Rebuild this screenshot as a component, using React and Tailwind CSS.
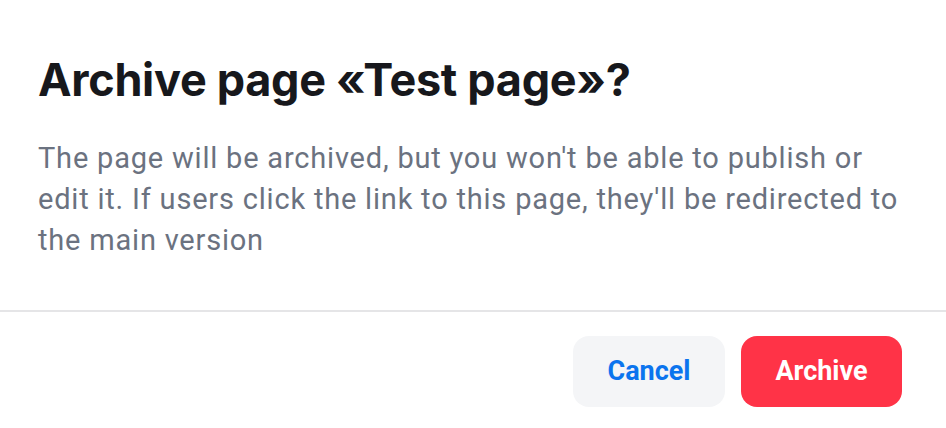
export default function App() {
  return (
    <div className="w-[946px] h-[428px] bg-white flex flex-col overflow-hidden">
      <div className="px-[38px] pt-[52px]">
        <h1 className="text-[45px] leading-[56px] font-bold text-[#17181c] tracking-[-0.3px]" style={{ fontFamily: 'Inter, "Noto Sans", sans-serif' }}>
          Archive page «Test page»?
        </h1>
        <p className="mt-[30px] max-w-[870px] text-[29px] leading-[41px] tracking-[0.8px] text-[#6b7280]" style={{ fontFamily: 'Roboto, sans-serif' }}>
          The page will be archived, but you won't be able to publish or edit it. If users click the link to this page, they'll be redirected to the main version
        </p>
      </div>
      <div className="mt-[49px] h-[2px] bg-[#e5e5e7]" />
      <div className="flex justify-end gap-[16px] pr-[44px] pt-[24px]" style={{ fontFamily: 'Roboto, sans-serif' }}>
        <button className="w-[152px] h-[71px] rounded-[16px] bg-[#f4f5f7] text-[#0b74ee] text-[27px] font-bold">Cancel</button>
        <button className="w-[161px] h-[71px] rounded-[16px] bg-[#ff3347] text-white text-[27px] font-bold">Archive</button>
      </div>
    </div>
  )
}
